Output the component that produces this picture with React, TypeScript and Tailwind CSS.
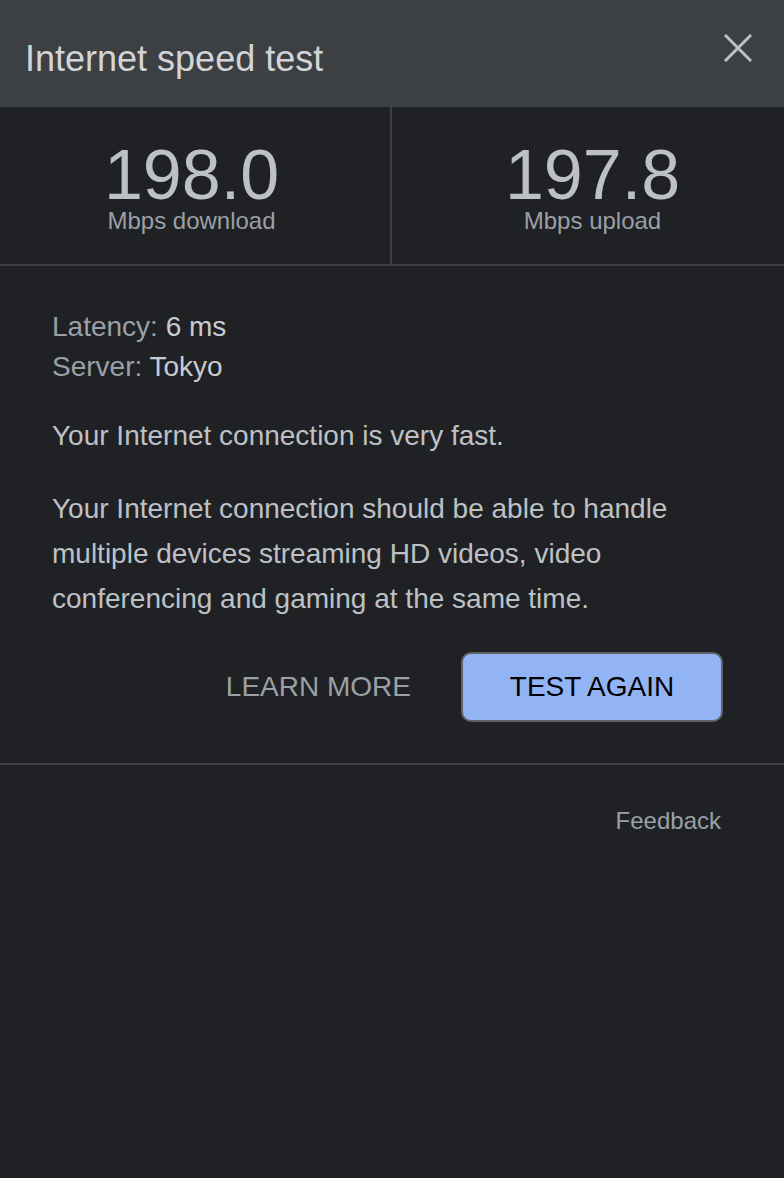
import React from 'react';

const Stat: React.FC<{ value: string; label: string; className?: string }> = ({ value, label, className }) => (
  <div className={`flex-1 flex flex-col items-center pt-[36px] ${className ?? ''}`}>
    <div className="text-[70px] leading-[64px] text-[#bdc1c6]">{value}</div>
    <div className="text-[24px] leading-[28px] text-[#9aa0a6]">{label}</div>
  </div>
);

export default function App() {
  return (
    <div
      className="min-h-[1178px] w-full bg-[#202124] text-[#bdc1c6]"
      style={{ fontFamily: '"Liberation Sans", Arial, sans-serif' }}
    >
      <div className="h-[107px] bg-[#3c4043] flex items-start justify-between pl-[25px] pr-[32px]">
        <h1 className="mt-[39px] text-[36px] leading-[40px] text-[#d2d4d7]">Internet speed test</h1>
        <button aria-label="Close" className="mt-[34px] w-[28px] h-[28px] flex items-center justify-center">
          <svg width="28" height="28" viewBox="0 0 28 28" fill="none" stroke="#bdc1c6" strokeWidth="3" strokeLinecap="square">
            <path d="M2 2L26 26M26 2L2 26" />
          </svg>
        </button>
      </div>

      <div className="flex h-[159px] border-b-2 border-[#3c4043]">
        <Stat value="198.0" label="Mbps download" className="pr-[7px] border-r-2 border-[#3c4043]" />
        <Stat value="197.8" label="Mbps upload" className="pl-[9px]" />
      </div>

      <div className="pl-[52px] pr-[61px] pt-[41px] pb-[41px] border-b-2 border-[#3c4043]">
        <div className="text-[28px] leading-[40px]">
          <div>
            <span className="text-[#9aa0a6]">Latency:</span> <span className="text-[#c8cbcf]">6 ms</span>
          </div>
          <div>
            <span className="text-[#9aa0a6]">Server:</span> <span className="text-[#c8cbcf]">Tokyo</span>
          </div>
        </div>
        <p className="text-[28px] leading-[40px] mt-[29px] text-[#bdc1c6]">
          Your Internet connection is very fast.
        </p>
        <p className="text-[28px] leading-[45px] mt-[30px] text-[#bdc1c6]">
          Your Internet connection should be able to handle multiple devices streaming HD videos, video
          conferencing and gaming at the same time.
        </p>
        <div className="flex justify-end items-center mt-[31px]">
          <button className="h-[70px] px-[50px] text-[28px] text-[#9aa0a6]">LEARN MORE</button>
          <button className="h-[70px] w-[262px] rounded-[10px] border-2 border-[#5f6368] bg-[#92b4f4] text-[28px] text-black">
            TEST AGAIN
          </button>
        </div>
      </div>

      <div className="flex justify-end pr-[63px] pt-[40px]">
        <a className="text-[24px] leading-[32px] text-[#9aa0a6]">Feedback</a>
      </div>
    </div>
  );
}
